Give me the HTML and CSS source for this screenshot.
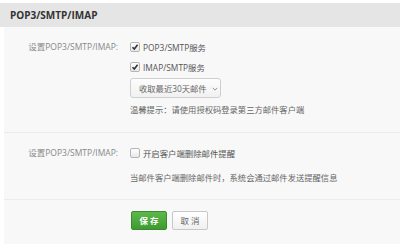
FILE: index.html
```html
<!DOCTYPE html>
<html>
<head>
<meta charset="utf-8">
<link rel="stylesheet" href="styles.css">
</head>
<body>
<div class="panel">
  <div class="panel-head">POP3/SMTP/IMAP</div>
  <div class="panel-body">
    <div class="section s1">
      <div class="label">设置POP3/SMTP/IMAP:</div>
      <div class="content">
        <div class="row"><span class="cb checked"><svg viewBox="0 0 8 8" width="8" height="8"><path d="M1.5 4.2 L3.3 6 L6.6 1.8" fill="none" stroke="#333" stroke-width="1.6"/></svg></span><span class="cbtext">POP3/SMTP服务</span></div>
        <div class="row"><span class="cb checked"><svg viewBox="0 0 8 8" width="8" height="8"><path d="M1.5 4.2 L3.3 6 L6.6 1.8" fill="none" stroke="#333" stroke-width="1.6"/></svg></span><span class="cbtext">IMAP/SMTP服务</span></div>
        <div class="select"><span>收取最近30天邮件</span><svg class="chev" viewBox="0 0 8 5" width="6" height="4"><path d="M1 1 L4 4 L7 1" fill="none" stroke="#888" stroke-width="1.2"/></svg></div>
        <div class="hint">温馨提示：请使用授权码登录第三方邮件客户端</div>
      </div>
    </div>
    <div class="section s2">
      <div class="label">设置POP3/SMTP/IMAP:</div>
      <div class="content">
        <div class="row"><span class="cb"></span><span class="cbtext">开启客户端删除邮件提醒</span></div>
        <div class="info">当邮件客户端删除邮件时，系统会通过邮件发送提醒信息</div>
      </div>
    </div>
    <div class="section s3">
      <div class="label"></div>
      <div class="buttons">
        <button class="btn save">保 存</button>
        <button class="btn cancel">取 消</button>
      </div>
    </div>
  </div>
</div>
</body>
</html>
```
FILE: styles.css
```css
html, body {
  margin: 0;
  padding: 0;
  background: #ffffff;
  font-family: "Open Sans", "Noto Sans CJK SC", sans-serif;
}
.panel {
  margin-top: 3px;
}
.panel-head {
  height: 24px;
  line-height: 24px;
  background: #e5e5e5;
  padding-left: 10px;
  font-size: 10px;
  font-weight: bold;
  color: #333;
  white-space: nowrap;
}
.panel-body {
  background: #f8f8f8;
  margin-left: 4px;
}
.section {
  display: flex;
  border-bottom: 1px solid #ececec;
}
.section.s3 {
  border-bottom: none;
  padding: 11px 0 13px;
}
.s1 {
  padding: 10px 0 14px;
}
.s2 {
  padding: 10px 0 13px;
}
.label {
  width: 114px;
  flex: none;
  text-align: right;
  font-size: 8.5px;
  color: #888;
  line-height: 20px;
  height: 20px;
  white-space: nowrap;
}
.content {
  margin-left: 12px;
  display: flex;
  flex-direction: column;
  align-items: flex-start;
}
.row {
  height: 20px;
  display: flex;
  align-items: center;
  white-space: nowrap;
}
.cb {
  width: 8px;
  height: 8px;
  border: 1px solid #b5b5b5;
  border-radius: 2px;
  background: linear-gradient(#ffffff, #e8e8e8);
  display: inline-flex;
  align-items: center;
  justify-content: center;
  margin-right: 3px;
}
.cb svg {
  display: block;
}
.cbtext {
  font-size: 8.4px;
  color: #555;
}
.select {
  margin-top: 1px;
  height: 18px;
  width: 81px;
  padding-left: 8px;
  border: 1px solid #cfcfcf;
  border-radius: 3px;
  background: linear-gradient(#fdfdfd, #f1f1f1);
  font-size: 8.3px;
  color: #666;
  display: flex;
  align-items: center;
  gap: 5px;
  white-space: nowrap;
  box-sizing: content-box;
}
.chev {
  margin-top: 1px;
  flex: none;
}
.hint {
  margin-top: 4px;
  height: 16px;
  line-height: 16px;
  font-size: 8.3px;
  color: #666;
  white-space: nowrap;
}
.info {
  margin-top: 7px;
  height: 16px;
  line-height: 16px;
  font-size: 8.3px;
  color: #666;
  white-space: nowrap;
}
.buttons {
  margin-left: 13px;
  display: flex;
  gap: 5px;
}
.btn {
  height: 19px;
  width: 36px;
  padding: 0;
  border-radius: 2px;
  font-family: "Noto Sans CJK SC", sans-serif;
  font-size: 8.5px;
  line-height: 17px;
}
.save {
  background: linear-gradient(#5cb84a, #3f9a31);
  border: 1px solid #3a8b2e;
  color: #fff;
  font-weight: bold;
}
.cancel {
  background: linear-gradient(#ffffff, #f0f0f0);
  border: 1px solid #c8c8c8;
  color: #666;
}
```
